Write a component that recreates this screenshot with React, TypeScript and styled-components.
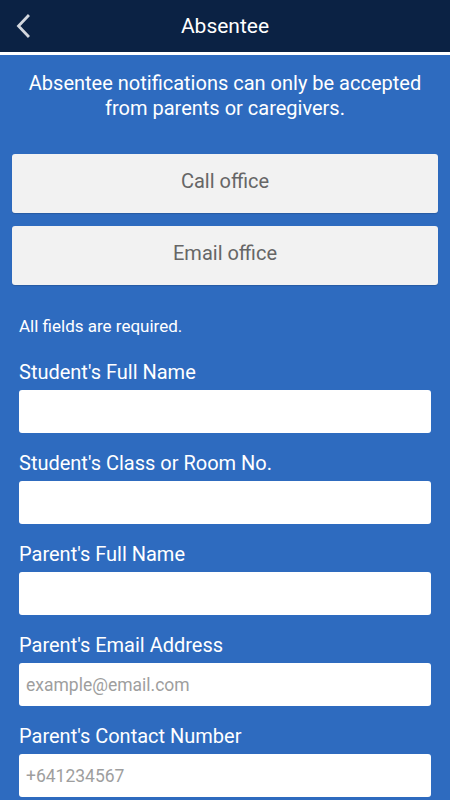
import React from "react";
import styled, { createGlobalStyle } from "styled-components";

const Global = createGlobalStyle`
  html, body { margin: 0; padding: 0; background: #2e6bbf; }
  body { font-family: Roboto, "Noto Sans", sans-serif; }
  * { box-sizing: border-box; }
`;

const Page = styled.div`
  width: 450px;
  min-height: 800px;
  background: #2e6bbf;
  display: flex;
  flex-direction: column;
`;

const Header = styled.header`
  height: 52px;
  background: #0b2244;
  border-bottom: 3px solid #ffffff;
  box-sizing: content-box;
  display: flex;
  align-items: center;
  justify-content: center;
  position: relative;
`;

const BackButton = styled.button`
  position: absolute;
  left: 10px;
  top: 12px;
  width: 26px;
  height: 28px;
  padding: 0;
  border: none;
  background: transparent;
  display: flex;
  align-items: center;
  justify-content: center;
`;

const Title = styled.h1`
  margin: 0;
  color: #ffffff;
  font-size: 21px;
  font-weight: 400;
  line-height: 1;
`;

const Intro = styled.p`
  margin: 16px 20px 0;
  color: #ffffff;
  font-size: 20px;
  line-height: 25px;
  text-align: center;
`;

const Buttons = styled.div`
  display: flex;
  flex-direction: column;
  gap: 13px;
  padding: 0 12px;
  margin-top: 33px;
`;

const OfficeButton = styled.button`
  height: 59px;
  border: none;
  border-radius: 3px;
  background: #f2f2f2;
  color: #666666;
  font-family: Roboto, sans-serif;
  font-size: 20px;
  padding: 0 0 6px;
  box-shadow: 0 1px 1px rgba(0, 0, 0, 0.15);
`;

const Form = styled.form`
  padding: 0 19px;
  margin-top: 31px;
  display: flex;
  flex-direction: column;
`;

const Note = styled.p`
  margin: 0 0 24px;
  color: #ffffff;
  font-size: 17px;
  line-height: 20px;
`;

const Field = styled.label`
  display: flex;
  flex-direction: column;
  margin-bottom: 18px;
`;

const Label = styled.span`
  color: #ffffff;
  font-size: 20px;
  line-height: 24px;
  margin-bottom: 6px;
`;

const Input = styled.input`
  width: 100%;
  height: 43px;
  border: none;
  border-radius: 3px;
  background: #ffffff;
  padding: 0 7px;
  font-family: Roboto, sans-serif;
  font-size: 17.5px;
  color: #333;
  outline: none;
  &::placeholder { color: #9e9e9e; }
`;

const fields = [
  { label: "Student's Full Name", placeholder: "" },
  { label: "Student's Class or Room No.", placeholder: "" },
  { label: "Parent's Full Name", placeholder: "" },
  { label: "Parent's Email Address", placeholder: "example@email.com" },
  { label: "Parent's Contact Number", placeholder: "+641234567" },
];

export default function App() {
  return (
    <Page>
      <Global />
      <Header>
        <BackButton aria-label="Back">
          <svg width="16" height="24" viewBox="0 0 16 24">
            <path d="M13 2 L3.5 12 L13 22" fill="none" stroke="#d3d7de" strokeWidth="2.8" strokeLinecap="square" />
          </svg>
        </BackButton>
        <Title>Absentee</Title>
      </Header>
      <Intro>
        Absentee notifications can only be accepted from parents or caregivers.
      </Intro>
      <Buttons>
        <OfficeButton>Call office</OfficeButton>
        <OfficeButton>Email office</OfficeButton>
      </Buttons>
      <Form>
        <Note>All fields are required.</Note>
        {fields.map((f) => (
          <Field key={f.label}>
            <Label>{f.label}</Label>
            <Input placeholder={f.placeholder} />
          </Field>
        ))}
      </Form>
    </Page>
  );
}
